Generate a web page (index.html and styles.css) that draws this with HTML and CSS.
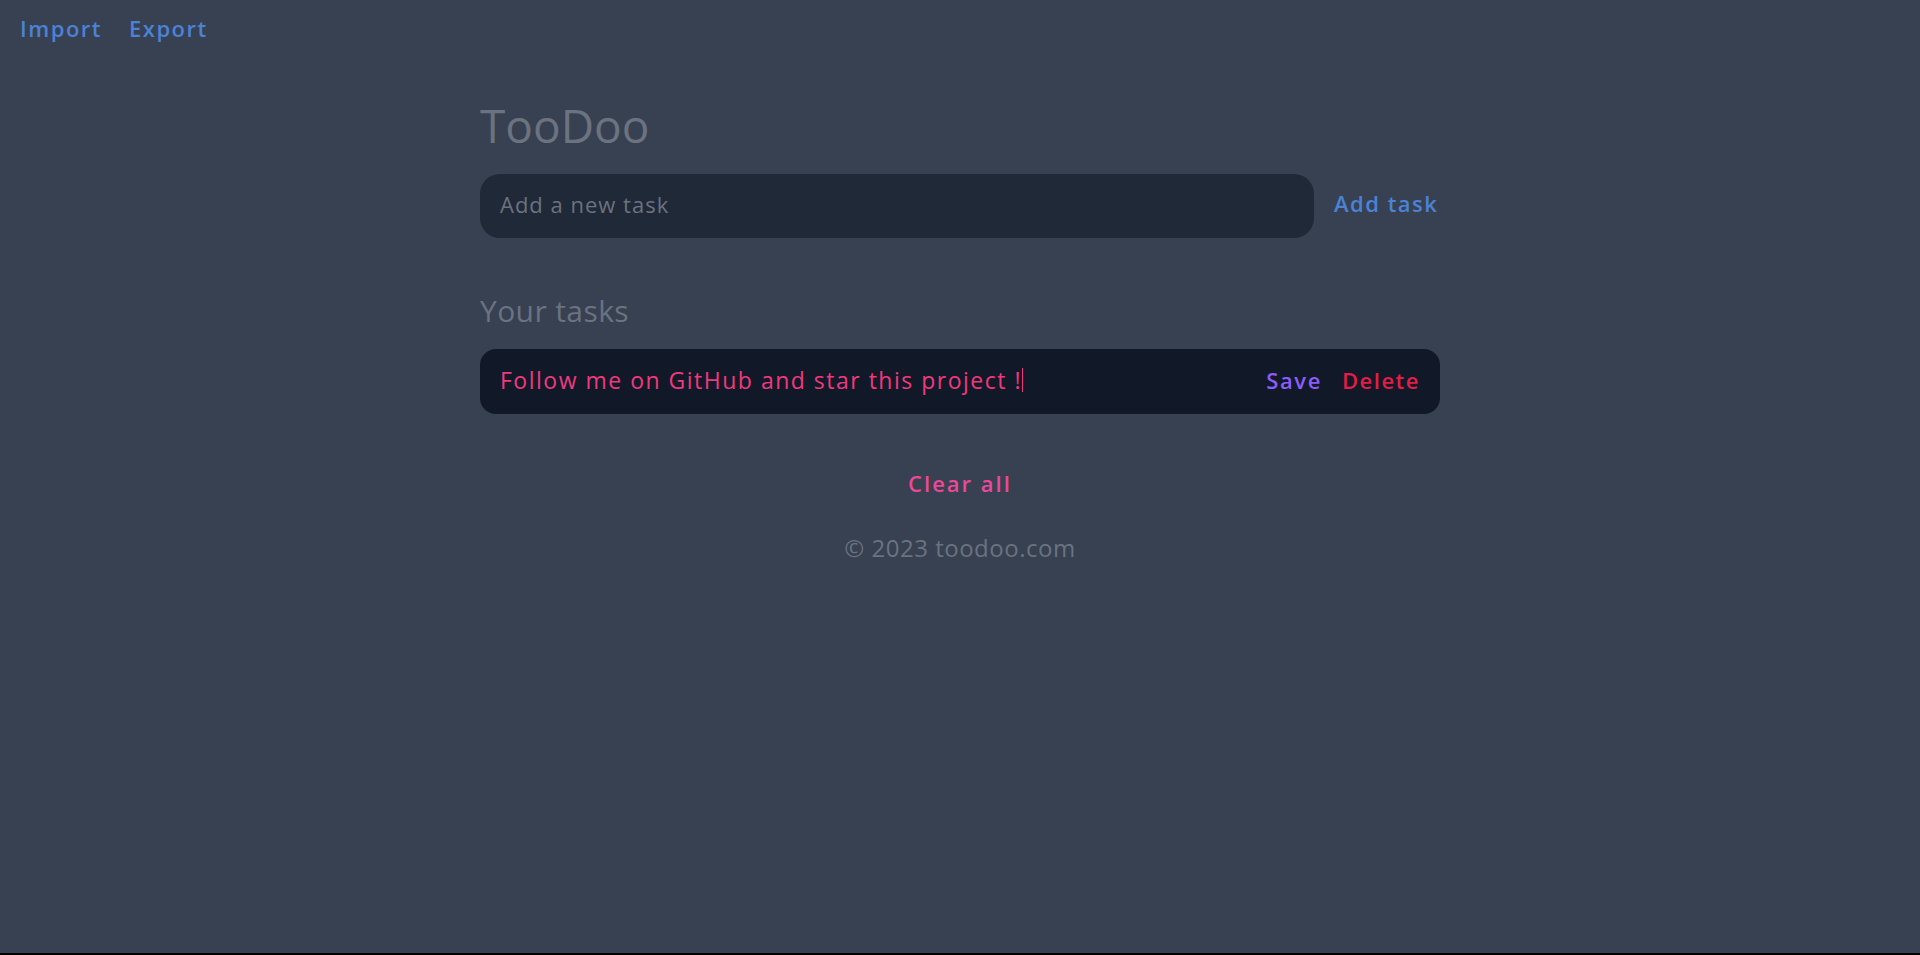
FILE: index.html
```html
<!DOCTYPE html>
<html lang="en">
<head>
<meta charset="utf-8">
<title>TooDoo</title>
<link rel="stylesheet" href="styles.css">
</head>
<body>
<div class="page">
  <nav class="topnav">
    <a class="navlink">Import</a>
    <a class="navlink">Export</a>
  </nav>
  <main class="container">
    <h1 class="title">TooDoo</h1>
    <div class="add-row">
      <div class="add-input">Add a new task</div>
      <a class="add-btn">Add task</a>
    </div>
    <h2 class="subtitle">Your tasks</h2>
    <div class="task">
      <div class="task-text">Follow me on GitHub and star this project !<span class="caret"></span></div>
      <div class="task-actions">
        <a class="save">Save</a>
        <a class="delete">Delete</a>
      </div>
    </div>
    <div class="clear-row"><a class="clear">Clear all</a></div>
    <footer class="footer">© 2023 toodoo.com</footer>
  </main>
</div>
</body>
</html>
```
FILE: styles.css
```css
html {
  margin: 0;
  background: #000;
}
body {
  margin: 0;
  font-family: "Open Sans", "Noto Sans", sans-serif;
}
.page {
  height: 953px;
  background: #374151;
  overflow: hidden;
}
.topnav {
  display: flex;
  gap: 27px;
  padding: 12px 20px 0;
}
.navlink {
  color: #4b82d6;
  font-size: 22px;
  font-weight: 600;
  line-height: 32px;
  letter-spacing: 1.5px;
}
.container {
  width: 960px;
  margin: 0 auto;
}
.title {
  margin: 53px 0 0;
  font-size: 46px;
  font-weight: 400;
  color: #6b7280;
  line-height: 56px;
}
.add-row {
  display: flex;
  align-items: center;
  gap: 20px;
  margin-top: 21px;
}
.add-input {
  width: 834px;
  height: 64px;
  box-sizing: border-box;
  background: #1f2937;
  border-radius: 20px;
  padding: 0 0 5px 20px;
  display: flex;
  align-items: center;
  color: #6b7280;
  font-size: 22px;
  letter-spacing: 1px;
}
.add-btn {
  color: #4b82d6;
  font-size: 22px;
  font-weight: 600;
  letter-spacing: 1.5px;
  padding-bottom: 6px;
}
.subtitle {
  margin: 55px 0 0;
  font-size: 30px;
  font-weight: 400;
  color: #6b7280;
  line-height: 36px;
  letter-spacing: 0.4px;
}
.task {
  margin-top: 20px;
  height: 65px;
  box-sizing: border-box;
  background: #111827;
  border-radius: 16px;
  display: flex;
  align-items: center;
  justify-content: space-between;
  padding: 0 20px 4px 20px;
}
.task-text {
  color: #f0387f;
  font-size: 23px;
  letter-spacing: 1.5px;
  display: flex;
  align-items: center;
}
.caret {
  display: inline-block;
  width: 1px;
  height: 24px;
  background: #f0387f;
  margin-left: 0;
}
.task-actions {
  display: flex;
  gap: 20px;
}
.save {
  color: #8b5cf6;
  font-size: 22px;
  font-weight: 600;
  letter-spacing: 1.6px;
}
.delete {
  color: #e11d48;
  font-size: 22px;
  font-weight: 600;
  letter-spacing: 1.5px;
}
.clear-row {
  display: flex;
  justify-content: center;
  margin-top: 54px;
}
.clear {
  color: #ec4899;
  font-size: 22px;
  font-weight: 600;
  letter-spacing: 2px;
}
.footer {
  text-align: center;
  color: #6b7280;
  font-size: 24px;
  letter-spacing: 0.5px;
  margin-top: 33px;
}
```
